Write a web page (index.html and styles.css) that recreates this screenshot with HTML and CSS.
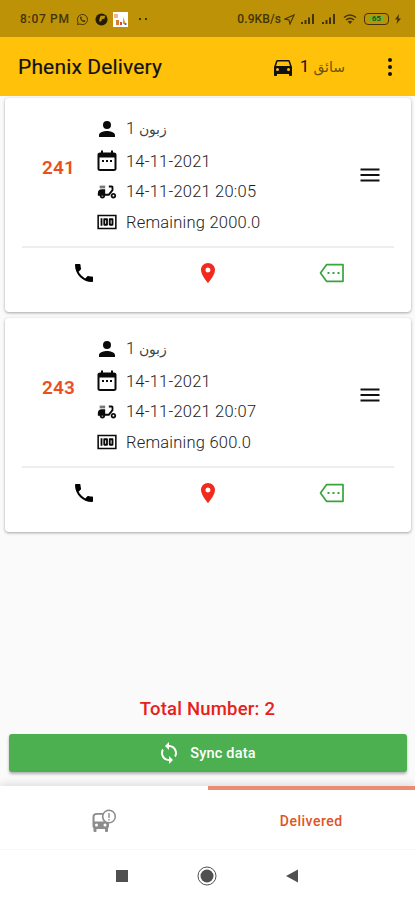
FILE: index.html
```html
<!DOCTYPE html>
<html lang="en">

<head>
    <meta charset="UTF-8">
    <meta name="viewport" content="width=device-width, initial-scale=1.0">
    <title>Phenix Delivery</title>
    <link rel="stylesheet" href="styles.css">
</head>

<body>
    <svg class="sprite">
        <symbol id="person" viewBox="0 0 24 24"><path d="M12 12a4 4 0 1 0 0-8 4 4 0 0 0 0 8zm0 2c-2.67 0-8 1.34-8 4v2h16v-2c0-2.66-5.33-4-8-4z"/></symbol>
        <symbol id="calendar" viewBox="0 0 24 24"><path d="M9 11H7v2h2v-2zm4 0h-2v2h2v-2zm4 0h-2v2h2v-2z"/><path d="M19 3.500h-1V1.500h-2v2H8v-2H6v2H5c-1.110 0-2.500.9-2.500 2V20c0 1.100 1.390 2 2.500 2h14c1.100 0 2.500-.9 2.500-2V5.500c0-1.100-1.400-2-2.500-2zm.5 16.500h-15V8.500h15V20z"/></symbol>
        <symbol id="scooter" viewBox="0 0 24 24"><path d="M19 7c0-1.100-.9-2-2-2h-3v2h3v2.650L13.520 14H10V9H6c-2.210 0-4 1.790-4 4v3h2c0 1.660 1.340 3 3 3s3-1.340 3-3h4.480L19 10.350V7zM7 17c-.55 0-1-.45-1-1h2c0 .55-.45 1-1 1z"/><path d="M4 5h6v3H4z" opacity=".55"/><path d="M19 13c-1.660 0-3 1.340-3 3s1.340 3 3 3 3-1.340 3-3-1.340-3-3-3zm0 4c-.55 0-1-.45-1-1s.45-1 1-1 1 .45 1 1-.45 1-1 1z"/></symbol>
        <symbol id="money" viewBox="0 0 24 24"><path d="M5 8h2v8H5zm7 0H9c-.55 0-1 .45-1 1v6c0 .55.45 1 1 1h3c.55 0 1-.45 1-1V9c0-.55-.45-1-1-1zm-1 6h-1v-4h1v4zm7-6h-3c-.55 0-1 .45-1 1v6c0 .55.45 1 1 1h3c.55 0 1-.45 1-1V9c0-.55-.45-1-1-1zm-1 6h-1v-4h1v4z"/><path d="M1.500 4v16h21V4h-21zm1.700 14.300V5.700h17.600v12.600H3.200z"/></symbol>
        <symbol id="menu" viewBox="0 0 24 24"><path d="M2.500 16.500h19v2h-19zM2.500 11h19v2h-19zM2.500 5.500h19v2h-19z"/></symbol>
        <symbol id="phone" viewBox="0 0 24 24"><path d="M6.620 10.790c1.440 2.830 3.760 5.140 6.590 6.590l2.200-2.200c.27-.27.67-.36 1.020-.24 1.120.37 2.330.57 3.570.57.55 0 1 .45 1 1V20c0 .55-.45 1-1 1-9.390 0-17-7.610-17-17 0-.55.45-1 1-1h3.500c.55 0 1 .45 1 1 0 1.250.2 2.450.57 3.570.11.35.03.74-.25 1.020l-2.200 2.200z"/></symbol>
        <symbol id="pin" viewBox="0 0 24 24"><path d="M12 2C8.130 2 5 5.130 5 9c0 5.250 7 13 7 13s7-7.750 7-13c0-3.870-3.130-7-7-7zm0 9.500a2.500 2.500 0 1 1 0-5 2.500 2.500 0 0 1 0 5z"/></symbol>
        <symbol id="label" viewBox="0 0 26 24"><path d="M7.500 3.700H24v16.600H7.500L1.500 12z" fill="none" stroke="currentColor" stroke-width="1.700" stroke-linejoin="round"/><path d="M8.500 11h2v2h-2zM13.500 11h2v2h-2zM18.500 11h2v2h-2z"/></symbol>
        <symbol id="car" viewBox="0 0 24 24"><path d="M18.920 6.010C18.720 5.420 18.160 5 17.500 5h-11c-.66 0-1.210.42-1.420 1.010L3 12v8c0 .55.45 1 1 1h1c.55 0 1-.45 1-1v-1h12v1c0 .55.45 1 1 1h1c.55 0 1-.45 1-1v-8l-2.080-5.990zM6.500 16a1.500 1.500 0 1 1 0-3 1.500 1.500 0 0 1 0 3zm11 0a1.500 1.500 0 1 1 0-3 1.500 1.500 0 0 1 0 3zM5 11l1.500-4.500h11L19 11H5z"/></symbol>
        <symbol id="sync" viewBox="0 0 24 24"><path d="M12 4V1L8 5l4 4V6c3.310 0 6 2.690 6 6 0 1.010-.25 1.970-.7 2.800l1.460 1.460A7.930 7.930 0 0 0 20 12c0-4.420-3.580-8-8-8zm0 14c-3.310 0-6-2.690-6-6 0-1.010.25-1.970.7-2.800L5.240 7.740A7.930 7.930 0 0 0 4 12c0 4.420 3.580 8 8 8v3l4-4-4-4v3z"/></symbol>
        <symbol id="bus" viewBox="0 0 24 24"><path d="M17 .5a7 7 0 0 0-6 3.500H5C2 4 .5 5.500.5 8v9c0 .95.380 1.810 1 2.440V22a1 1 0 0 0 1 1h1a1 1 0 0 0 1-1v-2H13v2a1 1 0 0 0 1 1h1a1 1 0 0 0 1-1v-2.560c.62-.63 1-1.490 1-2.440v-2.500A7 7 0 0 0 17 .5zM4.500 17.500a1.500 1.500 0 1 1 0-3 1.500 1.500 0 0 1 0 3zM2.500 12.500V8c0-1.500.8-2.200 2.500-2.200h5.200a7 7 0 0 0 1.600 6.700zM13 17.500a1.500 1.500 0 1 1 0-3 1.500 1.500 0 0 1 0 3zM17 13a5.500 5.500 0 1 1 0-11 5.500 5.500 0 0 1 0 11zM16.300 4h1.400v5h-1.400zM16.300 10h1.400v1.400h-1.400z"/></symbol>
        <symbol id="signal" viewBox="0 0 16 12"><path d="M1 9h2v2H1zM4.500 7h2v4h-2zM8 4.500h2V11H8zM12 1h2v10h-2z"/></symbol>
    </svg>

    <div class="statusbar">
        <span class="time">8:07 PM</span>
        <svg class="whatsapp" viewBox="0 0 14 14"><path d="M1.500 12.500l.7-2.700a5.500 5.500 0 1 1 2 2z" fill="none" stroke="currentColor"/><path d="M4.500 4l1.200-.2.700 1.700-.6.800c.4.900 1 1.500 1.900 1.900l.8-.7 1.700.8-.3 1.200c-2.800 1-6.200-2.500-5.400-5.500z"/></svg>
        <svg class="globe" viewBox="0 0 14 14"><circle cx="7" cy="7" r="6.500"/><path d="M6 3h5l-.8 3.200-2.200.2-1.700 2.800H4.500l.3-3z" fill="#be9206"/></svg>
        <svg class="thumb" viewBox="0 0 15 15"><path d="M0 0h15v15H0z" fill="#fff"/><path d="M1 2h4v4H1z" fill="#efb39b"/><path d="M3 8h3v5H3z" fill="#d97b35"/><path d="M10 5l3 7h-3z" fill="#e39a28"/><path d="M7 10h2v3H7z" fill="#d34a3a"/><path d="M11.500 11h2v2h-2z" fill="#4778b8"/></svg>
        <span class="dots"><i></i><i></i></span>
        <span class="speed">0.9KB/s</span>
        <svg class="location" viewBox="0 0 12 12"><path d="M1 5.500L11 1 6.500 11 5.500 6.500z" fill="none" stroke="currentColor" stroke-width="1.200"/></svg>
        <svg class="signal"><use href="#signal"/></svg>
        <svg class="signal"><use href="#signal"/></svg>
        <svg class="wifi" viewBox="0 0 14 12"><path d="M1 4.500q6-5 12 0M3 7q4-3.500 8 0" fill="none" stroke="currentColor" stroke-width="1.400"/><path d="M4.700 8.500q2.300-1.700 4.600 0L7 11z"/></svg>
        <span class="battery">65</span>
        <svg class="bolt" viewBox="0 0 8 10"><path d="M5 0L1 5.500h2.500L2.500 10 7 4.500H4.500z"/></svg>
    </div>

    <header class="appbar">
        <h1>Phenix Delivery</h1>
        <svg class="car"><use href="#car"/></svg>
        <span class="driver" dir="rtl"><span class="arabic">سائق</span> 1</span>
        <span class="more"><i></i><i></i><i></i></span>
    </header>

    <main>
        <article class="card">
            <div class="order">
                <h2>241</h2>
                <ul>
                    <li><svg><use href="#person"/></svg><span dir="rtl"><span class="arabic">زبون</span> 1</span></li>
                    <li><svg><use href="#calendar"/></svg><span>14-11-2021</span></li>
                    <li><svg><use href="#scooter"/></svg><span>14-11-2021 20:05</span></li>
                    <li><svg><use href="#money"/></svg><span>Remaining 2000.0</span></li>
                </ul>
                <svg class="menu"><use href="#menu"/></svg>
            </div>
            <div class="actions">
                <svg><use href="#phone"/></svg>
                <svg class="pin"><use href="#pin"/></svg>
                <svg class="label"><use href="#label"/></svg>
            </div>
        </article>
        <article class="card">
            <div class="order">
                <h2>243</h2>
                <ul>
                    <li><svg><use href="#person"/></svg><span dir="rtl"><span class="arabic">زبون</span> 1</span></li>
                    <li><svg><use href="#calendar"/></svg><span>14-11-2021</span></li>
                    <li><svg><use href="#scooter"/></svg><span>14-11-2021 20:07</span></li>
                    <li><svg><use href="#money"/></svg><span>Remaining 600.0</span></li>
                </ul>
                <svg class="menu"><use href="#menu"/></svg>
            </div>
            <div class="actions">
                <svg><use href="#phone"/></svg>
                <svg class="pin"><use href="#pin"/></svg>
                <svg class="label"><use href="#label"/></svg>
            </div>
        </article>
    </main>

    <p class="total">Total Number: 2</p>
    <button class="sync"><svg><use href="#sync"/></svg>Sync data</button>

    <nav class="tabs">
        <a class="tab"><svg><use href="#bus"/></svg></a>
        <a class="tab active">Delivered</a>
    </nav>

    <footer class="navbar">
        <svg viewBox="0 0 20 20"><path d="M4 4h12v12H4z"/></svg>
        <svg viewBox="0 0 20 20"><circle cx="10" cy="10" r="9" fill="none" stroke="currentColor"/><circle cx="10" cy="10" r="6.500"/></svg>
        <svg viewBox="0 0 20 20"><path d="M16 3.500v13L4 10z"/></svg>
    </footer>
</body>

</html>
```

FILE: styles.css
```css
* {
    box-sizing: border-box;
}

body {
    margin: 0;
    height: 900px;
    display: flex;
    flex-direction: column;
    background-color: #fafafa;
    font-family: Roboto, "DejaVu Sans", sans-serif;
    color: #111;
    overflow: hidden;
}

svg {
    display: block;
    flex: none;
    fill: currentColor;
}

.sprite {
    display: none;
}

.statusbar {
    height: 37px;
    padding: 1px 13px 0 20px;
    display: flex;
    align-items: center;
    background-color: #be9206;
    color: #433405;
    font-size: 12px;
    font-weight: 500;
}

.time {
    width: 56px;
    letter-spacing: 0.7px;
    white-space: nowrap;
}

.whatsapp {
    width: 13px;
    height: 13px;
}

.globe {
    width: 13px;
    height: 13px;
    margin-left: 6px;
    color: #241c05;
}

.thumb {
    width: 15px;
    height: 15px;
    margin-left: 5px;
}

.dots {
    display: flex;
    gap: 4px;
    margin-left: 11px;
}

.dots i {
    width: 2px;
    height: 2px;
    background-color: #433405;
}

.speed {
    margin-left: auto;
    letter-spacing: 0.1px;
}

.location {
    width: 11px;
    height: 11px;
    margin-left: 3px;
}

.signal {
    width: 16px;
    height: 12px;
    margin-left: 5px;
}

.wifi {
    width: 14px;
    height: 12px;
    margin-left: 6px;
}

.battery {
    width: 25px;
    height: 12px;
    margin-left: 7px;
    border: 1px solid #433405;
    border-radius: 4px;
    background: linear-gradient(#68b52e, #68b52e) center / 15px 6px no-repeat;
    font-size: 8px;
    line-height: 10px;
    text-align: center;
}

.bolt {
    width: 8px;
    height: 10px;
    margin-left: 5px;
}

.appbar {
    height: 59px;
    padding: 0 17px 0 18px;
    display: flex;
    align-items: center;
    background-color: #ffc10a;
}

.appbar h1 {
    margin: 0 auto 0 0;
    padding-top: 1px;
    font-size: 21px;
    font-weight: 400;
    letter-spacing: 0.15px;
    -webkit-text-stroke: 0.2px #111;
}

.car {
    width: 24px;
    height: 24px;
}

.driver {
    width: 43px;
    margin-left: 7px;
    font-size: 17px;
    line-height: 20px;
    white-space: nowrap;
}

.arabic {
    font-family: "DejaVu Sans", sans-serif;
    font-size: 14px;
    color: #444;
}

.driver .arabic {
    color: #6b5208;
}

.more {
    width: 16px;
    margin-left: 37px;
    display: flex;
    flex-direction: column;
    align-items: center;
    gap: 3px;
}

.more i {
    width: 4px;
    height: 4px;
    border-radius: 50%;
    background-color: #111;
}

main {
    padding: 2px 4px 0 5px;
}

.card {
    height: 214px;
    margin-bottom: 6px;
    padding: 0 17px;
    border-radius: 4px;
    background-color: #fff;
    box-shadow: 0 1px 3px rgba(0, 0, 0, 0.35);
}

.order {
    height: 150px;
    padding-top: 14px;
    display: flex;
    border-bottom: 2px solid #eee;
}

.order h2 {
    width: 53px;
    margin: 45px 0 0 20px;
    font-size: 19px;
    line-height: 22px;
    font-weight: 600;
    letter-spacing: 0.2px;
    color: #e8501f;
}

.order ul {
    margin: 0;
    padding: 0;
    list-style: none;
}

.order li {
    height: 30.5px;
    display: flex;
    align-items: center;
    gap: 7px;
    font-size: 16.5px;
    font-weight: 300;
    letter-spacing: 0.22px;
    color: #222;
    white-space: nowrap;
}

.order li:first-child {
    height: 34px;
    line-height: 20px;
}

.order li svg {
    width: 24px;
    height: 24px;
    color: #0a0a0a;
}

.order li:nth-child(n+3) svg {
    height: 22px;
}

.order li .arabic {
    letter-spacing: 0;
}

.menu {
    width: 24px;
    height: 24px;
    margin: 51px 12px 0 auto;
}

.actions {
    height: 50px;
    display: grid;
    grid-template-columns: repeat(3, 1fr);
    place-items: center;
}

.actions svg {
    width: 24px;
    height: 24px;
    color: #000;
}

.actions .pin {
    color: #f02a1d;
}

.actions .label {
    width: 26px;
    color: #38a43c;
}

.total {
    margin: auto 0 13px;
    font-size: 18.5px;
    line-height: 24px;
    font-weight: 500;
    letter-spacing: 0.2px;
    text-align: center;
    color: #e9201a;
}

.sync {
    height: 38px;
    margin: 0 8px 14px 9px;
    padding: 0 3px 0 0;
    display: flex;
    align-items: center;
    justify-content: center;
    gap: 9px;
    flex: none;
    border: 0;
    border-radius: 3px;
    background-color: #4caf50;
    box-shadow: 0 2px 3px rgba(0, 0, 0, 0.3);
    color: #fff;
    font-family: inherit;
    font-size: 14.5px;
    font-weight: 500;
    letter-spacing: 0.2px;
}

.sync svg {
    width: 24px;
    height: 24px;
}

.tabs {
    height: 64px;
    display: grid;
    grid-template-columns: 1fr 1fr;
    background-color: #fff;
    border-bottom: 1px solid #f7f7f7;
    box-shadow: 0 -2px 8px rgba(0, 0, 0, 0.12);
}

.tab {
    display: flex;
    align-items: center;
    justify-content: center;
    padding-top: 6px;
    font-size: 14px;
    font-weight: 500;
    letter-spacing: 0.5px;
    color: #e05226;
}

.tab svg {
    width: 24px;
    height: 24px;
    color: #8c8c8c;
}

.tab.active {
    padding-top: 3px;
    border-top: 4px solid #e98c72;
}

.navbar {
    height: 50px;
    padding: 1px 1px 0 0;
    display: flex;
    justify-content: center;
    align-items: center;
    gap: 65px;
    background-color: #fff;
    color: #505050;
}

.navbar svg {
    width: 20px;
    height: 20px;
}
```
